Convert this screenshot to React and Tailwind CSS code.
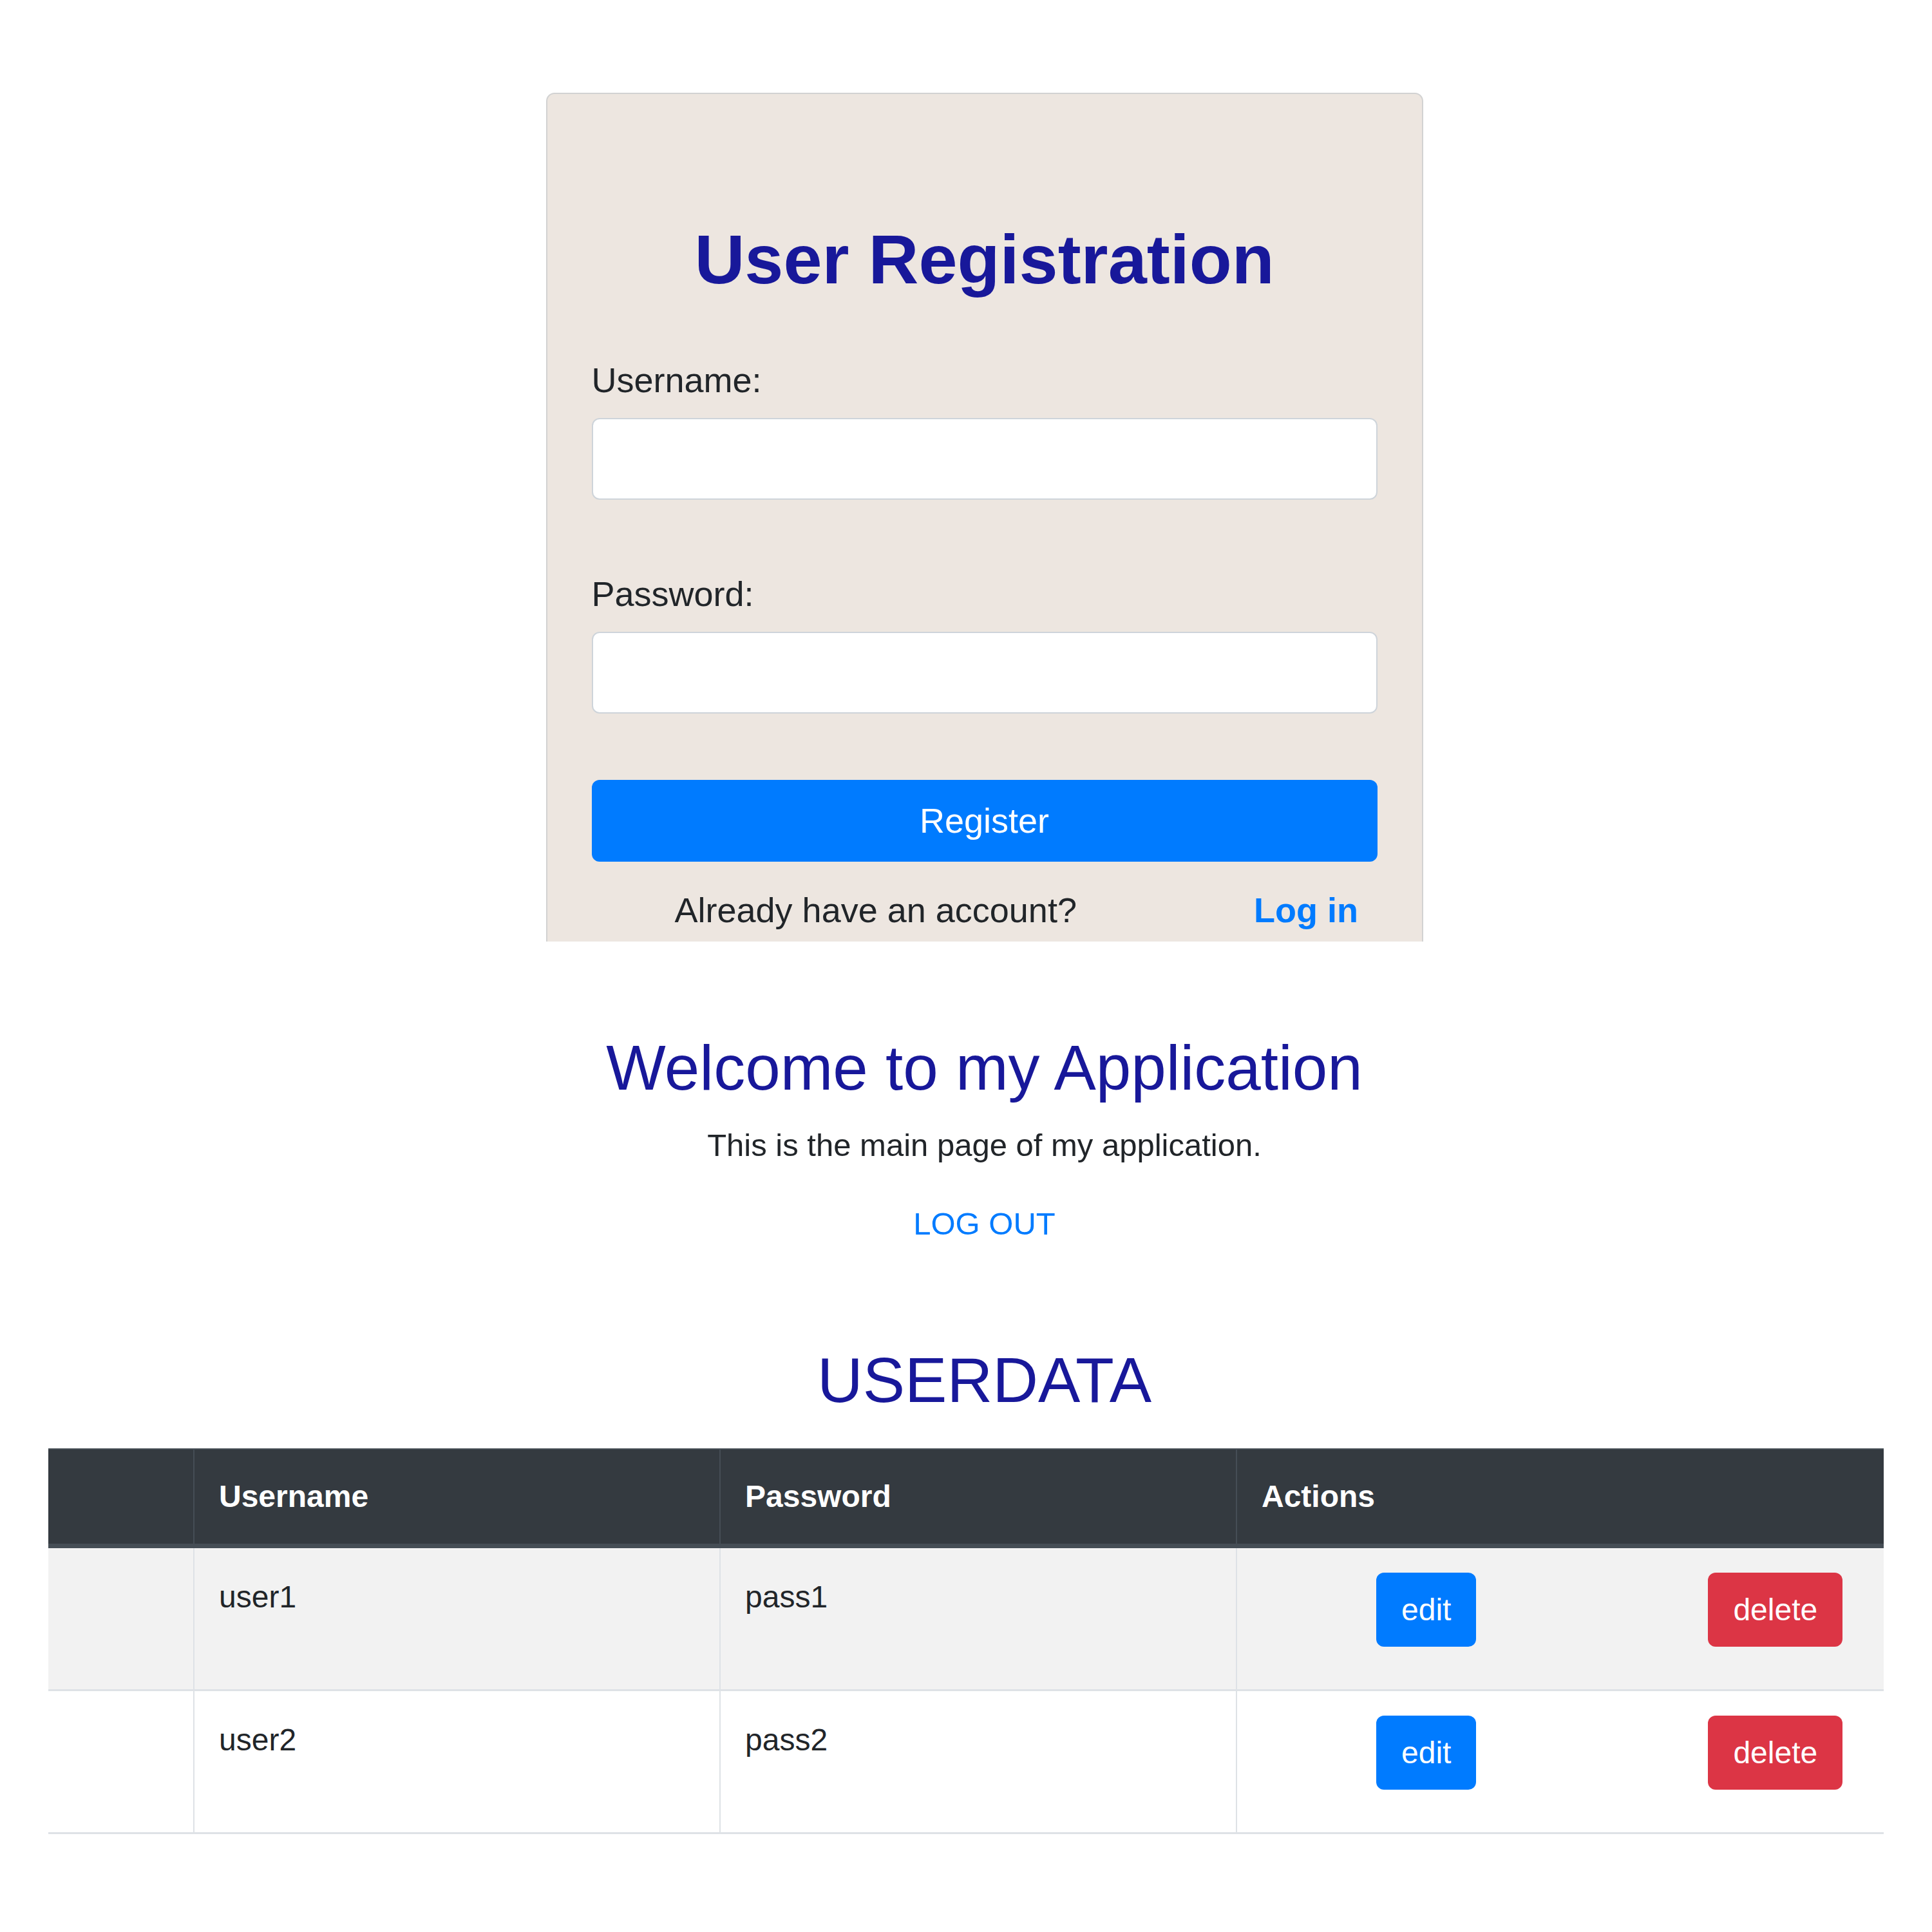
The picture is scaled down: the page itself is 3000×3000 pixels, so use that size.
import React, { useState } from 'react';

function RegisterCard() {
  const [username, setUsername] = useState('');
  const [password, setPassword] = useState('');

  return (
    <div className="w-[1362px] text-left bg-[#ede6e0] border-2 border-b-0 border-[#d2d2d2] rounded-t-[13px] px-[69px] pt-[195px] pb-[8px]">
      <h1 className="text-center text-[108px] leading-[124px] font-bold text-[#18189a]">
        User Registration
      </h1>
      <label htmlFor="username" className="block mt-[85px] text-[54px] leading-[81px] text-[#212529]">
        Username:
      </label>
      <input
        id="username"
        type="text"
        value={username}
        onChange={(e) => setUsername(e.target.value)}
        className="block w-full mt-[18px] h-[127px] bg-white border-2 border-[#ced4da] rounded-[12px] px-[40px] text-[54px] outline-none"
      />
      <label htmlFor="password" className="block mt-[106px] text-[54px] leading-[81px] text-[#212529]">
        Password:
      </label>
      <input
        id="password"
        type="password"
        value={password}
        onChange={(e) => setPassword(e.target.value)}
        className="block w-full mt-[18px] h-[127px] bg-white border-2 border-[#ced4da] rounded-[12px] px-[40px] text-[54px] outline-none"
      />
      <button className="block w-full mt-[103px] h-[127px] bg-[#007bff] rounded-[12px] text-white text-[54px] leading-[81px]">
        Register
      </button>
      <div className="flex mt-[35px] pl-[129px] text-[54px] leading-[81px]">
        <span className="text-[#212529]">Already have an account?</span>
        <a href="#" className="ml-[275px] font-bold text-[#007bff]">Log in</a>
      </div>
    </div>
  );
}

function UserTable() {
  const users = [
    { username: 'user1', password: 'pass1' },
    { username: 'user2', password: 'pass2' },
  ];
  const cols = 'grid grid-cols-[225px_817px_802px_1006px]';

  return (
    <div className="ml-[75px] w-[2850px] mt-[50px] text-[48px] leading-[72px]">
      <div className={`${cols} bg-[#343a40] text-white font-bold border-t-[2px] border-b-[7px] border-[#454d55]`}>
        <div className="pt-[37px] pb-[37px]"></div>
        <div className="pt-[37px] pb-[37px] pl-[38px] border-l-2 border-[#454d55]">Username</div>
        <div className="pt-[37px] pb-[37px] pl-[38px] border-l-2 border-[#454d55]">Password</div>
        <div className="pt-[37px] pb-[37px] pl-[38px] border-l-2 border-[#454d55]">Actions</div>
      </div>
      {users.map((u, i) => (
        <div
          key={u.username}
          className={`${cols} h-[222px] border-b-[3px] border-[#dee2e6] text-[#212529] ${i % 2 === 0 ? 'bg-[#f2f2f2]' : 'bg-white'}`}
        >
          <div></div>
          <div className="pt-[40px] pl-[38px] border-l-2 border-[#dee2e6]">{u.username}</div>
          <div className="pt-[40px] pl-[38px] border-l-2 border-[#dee2e6]">{u.password}</div>
          <div className="flex items-start pt-[38px] pl-[216px] border-l-2 border-[#dee2e6]">
            <button className="h-[115px] px-[39px] rounded-[12px] bg-[#007bff] text-white">edit</button>
            <button className="h-[115px] px-[39px] ml-[360px] rounded-[12px] bg-[#dc3545] text-white">delete</button>
          </div>
        </div>
      ))}
    </div>
  );
}

export default function App() {
  return (
    <div className="min-h-screen bg-white font-['Liberation_Sans',Arial,sans-serif] pb-[100px]">
      <div className="flex flex-col items-center pl-[57px] pt-[144px] text-center">
        <RegisterCard />
        <h2 className="mt-[140px] text-[98px] leading-[112px] text-[#18189a]">Welcome to my Application</h2>
        <p className="mt-[28px] text-[49px] leading-[72px] text-[#212529]">This is the main page of my application.</p>
        <a href="#" className="mt-[50px] text-[49px] leading-[72px] text-[#007bff]">LOG OUT</a>
        <h2 className="mt-[151px] text-[98px] leading-[112px] text-[#18189a]">USERDATA</h2>
      </div>
      <UserTable />
    </div>
  );
}
